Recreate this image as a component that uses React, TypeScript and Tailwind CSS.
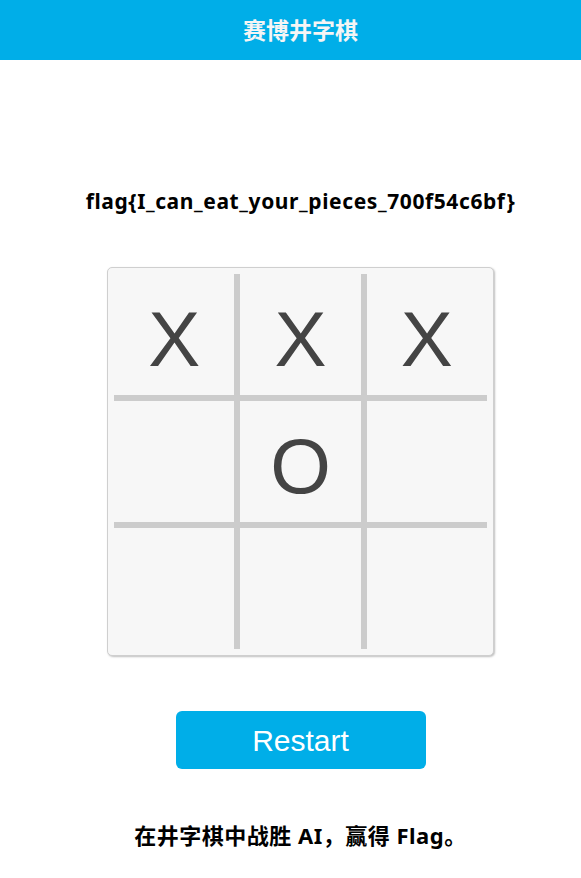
import { useState } from 'react';

const cjk = { fontFamily: '"Noto Sans", "Noto Sans CJK SC", sans-serif' };
const arial = { fontFamily: '"Liberation Sans", Arial, sans-serif' };

export default function App() {
  const [cells, setCells] = useState<string[]>(['X', 'X', 'X', '', 'O', '', '', '', '']);

  return (
    <div className="min-h-screen bg-white flex flex-col items-center" style={cjk}>
      <header className="w-full h-[60px] bg-[#00aee8] flex items-center justify-center pl-[20px]">
        <h1 className="text-[23px] font-bold text-[#f5f5f5] leading-none">赛博井字棋</h1>
      </header>

      <div className="w-full flex flex-col items-center pl-[20px]">
        <p className="mt-[127px] text-[21px] leading-[28px] font-bold tracking-[0.6px] text-black">
          flag{'{'}I_can_eat_your_pieces_700f54c6bf{'}'}
        </p>

        <div className="mt-[52px] w-[387px] rounded-[5px] border border-[#cfcfcf] bg-[#f7f7f7] p-[6px] shadow-[1px_1px_2px_rgba(0,0,0,0.25)]">
          <div className="grid grid-cols-3 grid-rows-[121px_121px_121px] gap-[6px] bg-[#cccccc]">
            {cells.map((c, i) => (
              <div
                key={i}
                className="bg-[#f7f7f7] flex items-center justify-center text-[78px] leading-none text-[#444444] pt-[8px]"
                style={arial}
              >
                {c}
              </div>
            ))}
          </div>
        </div>

        <button
          onClick={() => setCells(Array(9).fill(''))}
          className="mt-[55px] w-[250px] h-[58px] rounded-[6px] bg-[#00aee8] text-white text-[30px]"
          style={arial}
        >
          Restart
        </button>

        <p className="mt-[52px] text-[22px] leading-[28px] font-bold tracking-[0.5px] text-black">
          在井字棋中战胜 AI，赢得 Flag。
        </p>
      </div>
    </div>
  );
}
